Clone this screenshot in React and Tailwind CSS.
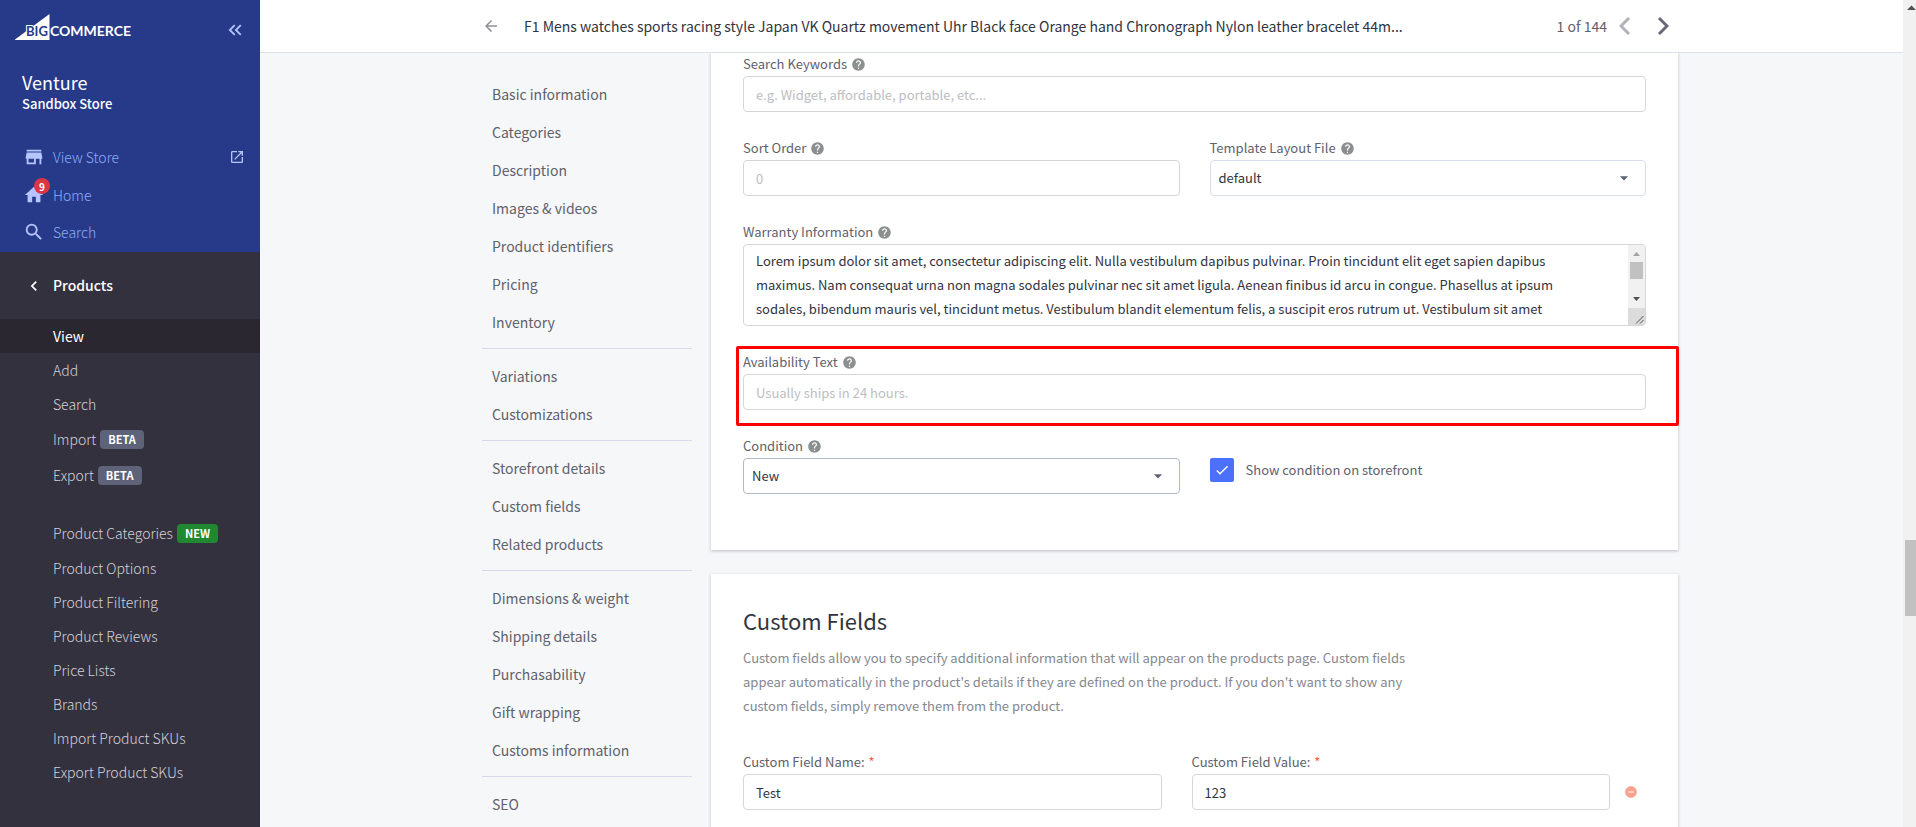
import React from "react";
import {
  MdStore,
  MdHome,
  MdSearch,
  MdOpenInNew,
  MdKeyboardDoubleArrowLeft,
  MdChevronLeft,
  MdArrowBack,
  MdArrowDropDown,
  MdCheck,
  MdHelp,
  MdRemoveCircle,
} from "react-icons/md";

const PRODUCT_LINKS = [
  { label: "View", active: true },
  { label: "Add" },
  { label: "Search" },
  { label: "Import", badge: "BETA" },
  { label: "Export", badge: "BETA" },
];

const CATALOG_LINKS = [
  { label: "Product Categories", badge: "NEW" },
  { label: "Product Options" },
  { label: "Product Filtering" },
  { label: "Product Reviews" },
  { label: "Price Lists" },
  { label: "Brands" },
  { label: "Import Product SKUs" },
  { label: "Export Product SKUs" },
];

const SECTION_GROUPS = [
  [
    "Basic information",
    "Categories",
    "Description",
    "Images & videos",
    "Product identifiers",
    "Pricing",
    "Inventory",
  ],
  ["Variations", "Customizations"],
  ["Storefront details", "Custom fields", "Related products"],
  [
    "Dimensions & weight",
    "Shipping details",
    "Purchasability",
    "Gift wrapping",
    "Customs information",
  ],
  ["SEO"],
];

const WARRANTY_TEXT =
  "Lorem ipsum dolor sit amet, consectetur adipiscing elit. Nulla vestibulum dapibus pulvinar. Proin tincidunt elit eget sapien dapibus maximus. Nam consequat urna non magna sodales pulvinar nec sit amet ligula. Aenean finibus id arcu in congue. Phasellus at ipsum sodales, bibendum mauris vel, tincidunt metus. Vestibulum blandit elementum felis, a suscipit eros rutrum ut. Vestibulum sit amet";

const inputClass =
  "block h-9 w-full rounded border border-[#d5d6d8] bg-white px-3 text-[13px] text-[#313440] placeholder:text-[#bcbec2] outline-none";

function Logo() {
  return (
    <svg width="120" height="27" viewBox="0 0 120 27" role="img" aria-label="BigCommerce">
      <path d="M0 25.5 L34.5 0 V26 H0 Z" fill="#fff" />
      <text
        x="11"
        y="22"
        fontFamily="Lato, sans-serif"
        fontWeight="700"
        fontSize="13"
        fill="#273a8a"
        stroke="#fff"
        strokeWidth="2"
        paintOrder="stroke"
      >
        BIG
      </text>
      <text
        x="35"
        y="22"
        fontFamily="Lato, sans-serif"
        fontWeight="700"
        fontSize="14"
        fill="#fff"
      >
        COMMERCE
      </text>
    </svg>
  );
}

function SideLink({ label, badge, active }) {
  return (
    <a
      href="#"
      className={`flex items-center gap-1 pl-[53px] text-[14px] ${badge ? "h-9" : "h-[34px]"} ${
        active ? "bg-[#2b2731] text-white" : "font-light text-[#d3d2d9]"
      }`}
    >
      {label}
      {badge && (
        <span
          className={`flex h-[19px] items-center rounded px-2 text-[11px] font-bold text-white ${
            badge === "NEW" ? "bg-[#208831]" : "bg-[#5e637a]"
          }`}
        >
          {badge}
        </span>
      )}
    </a>
  );
}

function Sidebar() {
  return (
    <aside className="flex w-[260px] shrink-0 flex-col bg-[#34313f]">
      <div className="h-[252px] bg-[#273a8a] text-[#b6c5ff]">
        <div className="flex items-start justify-between pt-[14px] pr-[14px] pl-[15px]">
          <Logo />
          <button type="button" aria-label="Collapse menu" className="mt-[5px]">
            <MdKeyboardDoubleArrowLeft size={22} />
          </button>
        </div>
        <div className="mt-7 pl-[22px] text-white">
          <div className="text-[18px] leading-[26px]">Venture</div>
          <div className="text-[13px] leading-[18px] font-medium">Sandbox Store</div>
        </div>
        <nav className="mt-[25px] text-[14px] font-light text-[#8fabf5]">
          <a href="#" className="flex h-[38px] items-center pr-[15px] pl-[23px]">
            <MdStore size={22} className="text-[#b6c5ff]" />
            <span className="ml-2 flex-1">View Store</span>
            <MdOpenInNew size={16} className="text-[#b6c5ff]" />
          </a>
          <a href="#" className="relative flex h-[38px] items-center pl-[23px]">
            <MdHome size={22} className="text-[#b6c5ff]" />
            <span className="absolute top-0.5 left-[34px] flex size-4 items-center justify-center rounded-full bg-[#db3643] text-[10px] font-bold text-white">
              9
            </span>
            <span className="ml-2">Home</span>
          </a>
          <a href="#" className="flex h-9 items-center pl-[23px]">
            <MdSearch size={22} className="text-[#b6c5ff]" />
            <span className="ml-2">Search</span>
          </a>
        </nav>
      </div>
      <button
        type="button"
        className="flex h-[67px] items-center pl-6 text-left text-[14px] font-medium text-white"
      >
        <MdChevronLeft size={20} className="mr-[9px]" />
        Products
      </button>
      <nav>
        {PRODUCT_LINKS.map((link) => (
          <SideLink key={link.label} {...link} />
        ))}
      </nav>
      <nav className="mt-[22px]">
        {CATALOG_LINKS.map((link) => (
          <SideLink key={link.label} {...link} />
        ))}
      </nav>
    </aside>
  );
}

function TopBar() {
  return (
    <header className="relative z-10 h-[52px] shrink-0 bg-white shadow-[0_1px_0_0_#dde1ee]">
      <div className="mx-auto flex h-full max-w-[1199px] items-center pr-3">
        <button type="button" aria-label="Back" className="text-[#8d8e9b]">
          <MdArrowBack size={18} />
        </button>
        <h1 className="ml-6 flex-1 truncate text-[14px] text-[#313440]">
          F1 Mens watches sports racing style Japan VK Quartz movement Uhr Black face Orange hand
          Chronograph Nylon leather bracelet 44m...
        </h1>
        <span className="text-[14px] text-[#5f616b]">1 of 144</span>
        <button type="button" aria-label="Previous product" className="ml-3 text-[#b1b1b8]">
          <svg width="12" height="20" viewBox="0 0 12 20" fill="none" stroke="currentColor" strokeWidth="3">
            <path d="M10 2 L2 10 L10 18" />
          </svg>
        </button>
        <button type="button" aria-label="Next product" className="ml-[26px] text-[#696878]">
          <svg width="12" height="20" viewBox="0 0 12 20" fill="none" stroke="currentColor" strokeWidth="3">
            <path d="M2 2 L10 10 L2 18" />
          </svg>
        </button>
      </div>
    </header>
  );
}

function SectionNav() {
  return (
    <nav className="mt-[15px] w-[210px] shrink-0 text-[14px] text-[#5f616b]">
      {SECTION_GROUPS.map((group) => (
        <div key={group[0]} className="border-b border-[#d6daea] pt-2 pb-[7px] pl-[10px]">
          {group.map((item) => (
            <a key={item} href="#" className="flex h-[38px] items-center">
              {item}
            </a>
          ))}
        </div>
      ))}
    </nav>
  );
}

function Field({ id, label, required, children }) {
  return (
    <div>
      <label htmlFor={id} className="flex h-6 items-center text-[13px] text-[#5f616b]">
        {label}
        {required ? (
          <span className="ml-1 text-[#ff5c35]">*</span>
        ) : (
          <MdHelp size={15} className="ml-1 text-[#8b8f8f]" />
        )}
      </label>
      {children}
    </div>
  );
}

function Select({ id, value, borderClass }) {
  return (
    <div className="relative">
      <select
        id={id}
        defaultValue={value}
        className={`block h-9 w-full appearance-none rounded border bg-white px-2 text-[13px] text-[#313440] outline-none ${borderClass}`}
      >
        <option>{value}</option>
      </select>
      <MdArrowDropDown
        size={20}
        className="pointer-events-none absolute top-2 right-3 text-[#5e637a]"
      />
    </div>
  );
}

function TextareaScrollbar() {
  return (
    <div className="absolute top-px right-px bottom-px flex w-[17px] flex-col items-center rounded-r bg-[#f1f1f1]">
      <svg width="17" height="17" viewBox="0 0 17 17" className="shrink-0">
        <path d="M5 11 L8.5 7 L12 11 Z" fill="#a3a3a3" />
      </svg>
      <div className="h-[17px] w-[13px] bg-[#c1c1c1]" />
      <div className="flex-1" />
      <svg width="17" height="17" viewBox="0 0 17 17" className="shrink-0">
        <path d="M5 6 L8.5 10 L12 6 Z" fill="#505050" />
      </svg>
      <svg width="17" height="17" viewBox="0 0 17 17" className="shrink-0 rounded-br bg-[#dcdcdc]">
        <path d="M8 15.5 L15.5 8 M12 15.5 L15.5 12" stroke="#505050" />
      </svg>
    </div>
  );
}

function StorefrontCard() {
  return (
    <section className="flex flex-col gap-6 bg-white px-8 pb-14 shadow-[0_1px_3px_0_rgba(49,52,64,0.3)]">
      <Field id="keywords" label="Search Keywords">
        <input id="keywords" className={inputClass} placeholder="e.g. Widget, affordable, portable, etc..." />
      </Field>
      <div className="grid grid-cols-2 gap-[30px]">
        <Field id="sort" label="Sort Order">
          <input id="sort" className={inputClass} placeholder="0" />
        </Field>
        <Field id="layout" label="Template Layout File">
          <Select id="layout" value="default" borderClass="border-[#d9dcec]" />
        </Field>
      </div>
      <Field id="warranty" label="Warranty Information">
        <div className="relative">
          <textarea
            id="warranty"
            defaultValue={WARRANTY_TEXT}
            className="block h-[82px] w-full resize-none overflow-hidden rounded border border-[#d5d6d8] py-1 pr-16 pl-3 text-[13px] leading-6 text-[#313440] outline-none"
          />
          <TextareaScrollbar />
        </div>
      </Field>
      <div className="relative">
        <Field id="availability" label="Availability Text">
          <input id="availability" className={inputClass} placeholder="Usually ships in 24 hours." />
        </Field>
        <div className="pointer-events-none absolute -top-1 -right-[33px] -bottom-4 -left-[7px] rounded-xs border-3 border-[#ff0000]" />
      </div>
      <div className="grid grid-cols-2 gap-[30px]">
        <Field id="condition" label="Condition">
          <Select id="condition" value="New" borderClass="border-[#b4b9d2]" />
        </Field>
        <label className="relative mt-6 flex h-6 items-center text-[13px] text-[#5f616b]">
          <input
            type="checkbox"
            defaultChecked
            className="mr-3 size-6 appearance-none rounded-xs bg-[#4b71fc]"
          />
          <MdCheck size={16} className="absolute top-1 left-1 stroke-current text-white" />
          Show condition on storefront
        </label>
      </div>
    </section>
  );
}

function CustomFieldsCard() {
  return (
    <section className="mt-6 bg-white px-8 pt-[30px] pb-14 shadow-[0_1px_3px_0_rgba(49,52,64,0.3)]">
      <h2 className="text-[22px] leading-8 text-[#313440]">Custom Fields</h2>
      <p className="mt-[10px] max-w-[700px] text-[13px] leading-6 text-[#85878f]">
        Custom fields allow you to specify additional information that will appear on the products
        page. Custom fields appear automatically in the product's details if they are defined on the
        product. If you don't want to show any custom fields, simply remove them from the product.
      </p>
      <div className="mt-8 flex items-end">
        <div className="grid flex-1 grid-cols-2 gap-[30px]">
          <Field id="cf-name" label="Custom Field Name:" required>
            <input id="cf-name" className={inputClass} defaultValue="Test" />
          </Field>
          <Field id="cf-value" label="Custom Field Value:" required>
            <input id="cf-value" className={inputClass} defaultValue="123" />
          </Field>
        </div>
        <button type="button" aria-label="Remove field" className="flex h-9 w-9 items-center pl-[14px] text-[#f9a18b]">
          <MdRemoveCircle size={14} />
        </button>
      </div>
    </section>
  );
}

function PageScrollbar() {
  return (
    <div className="flex w-[13px] shrink-0 flex-col items-end bg-[#f1f1f1]">
      <svg width="13" height="17" viewBox="0 0 13 17">
        <path d="M4 10 L8.5 5.5 L13 10 Z" fill="#505050" />
      </svg>
      <div className="mt-[523px] h-[76px] w-[11px] bg-[#c1c1c1]" />
    </div>
  );
}

export default function App() {
  return (
    <div className="flex h-screen overflow-hidden bg-[#f6f7f9] font-['Source_Sans_Pro','Noto_Sans_CJK_SC',sans-serif]">
      <Sidebar />
      <div className="flex min-w-0 flex-1 flex-col">
        <TopBar />
        <main className="min-h-0 flex-1 overflow-hidden">
          <div className="mx-auto flex max-w-[1199px] items-start gap-[19px] pr-[3px]">
            <SectionNav />
            <div className="min-w-0 flex-1">
              <StorefrontCard />
              <CustomFieldsCard />
            </div>
          </div>
        </main>
      </div>
      <PageScrollbar />
    </div>
  );
}
